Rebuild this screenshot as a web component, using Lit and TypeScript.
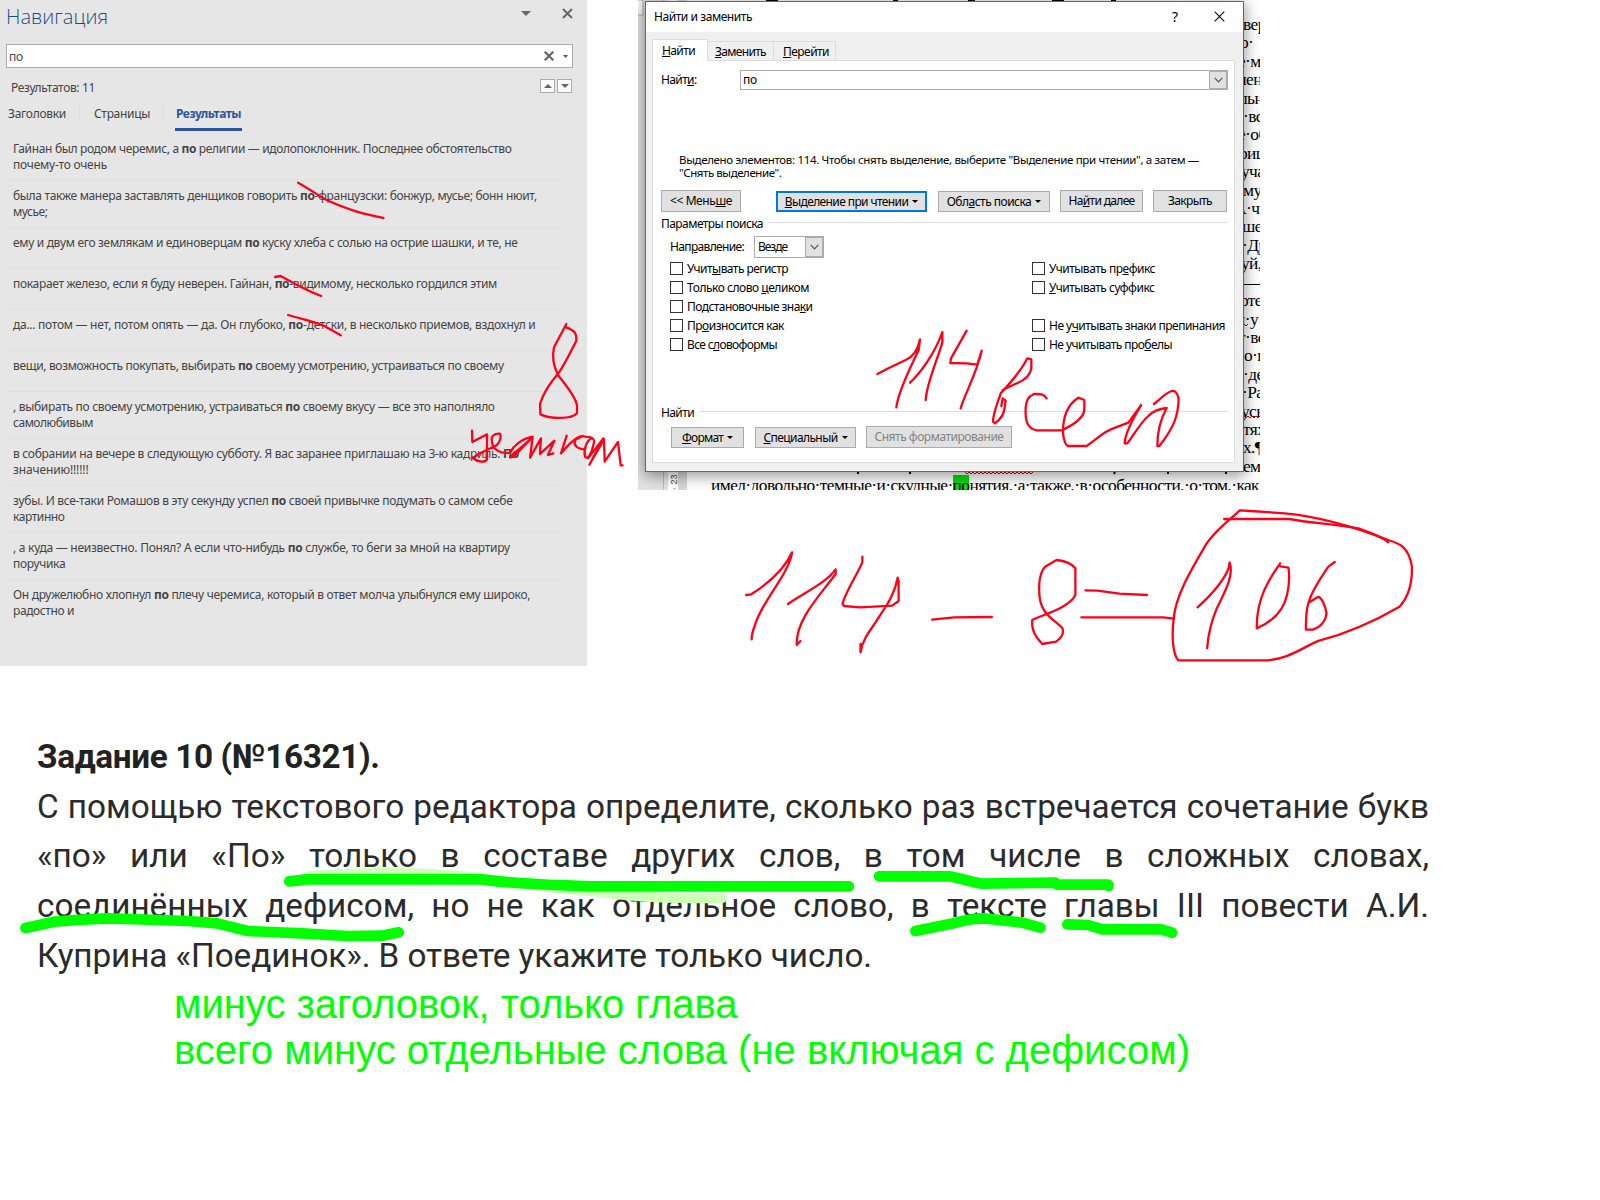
import { LitElement, html, svg, css, nothing } from "lit";
import { customElement, property } from "lit/decorators.js";

/** One line of text whose tracking is adjusted so that it spans `w` pixels. */
@customElement("fit-line")
class FitLine extends LitElement {
  @property({ type: Number }) w = 0;
  static styles = css`
    :host { display: inline-block; white-space: nowrap; }
  `;
  render() {
    return html`<slot></slot>`;
  }
  firstUpdated() {
    requestAnimationFrame(() => {
      const n = (this.textContent ?? "").trim().length;
      const natural = this.getBoundingClientRect().width;
      if (n && this.w) this.style.letterSpacing = `${((this.w - natural) / n).toFixed(4)}px`;
    });
  }
}

type Part = [number, string, string?, string?];

const results: Part[][] = [
  [[498.5, "Гайнан был родом черемис, а ", "по", " религии — идолопоклонник. Последнее обстоятельство"], [94, "почему-то очень"]],
  [[524, "была также манера заставлять денщиков говорить ", "по", "-французски: бонжур, мусье; бонн нюит,"], [34.5, "мусье;"]],
  [[504.5, "ему и двум его землякам и единоверцам ", "по", " куску хлеба с солью на острие шашки, и те, не"]],
  [[484, "покарает железо, если я буду неверен. Гайнан, ", "по", "-видимому, несколько гордился этим"]],
  [[522.5, "да... потом — нет, потом опять — да. Он глубоко, ", "по", "-детски, в несколько приемов, вздохнул и"]],
  [[490.7, "вещи, возможность покупать, выбирать ", "по", " своему усмотрению, устраиваться по своему"]],
  [[481.7, ", выбирать по своему усмотрению, устраиваться ", "по", " своему вкусу — все это наполняло"], [80, "самолюбивым"]],
  [[506, "в собрании на вечере в следующую субботу. Я вас заранее приглашаю на 3-ю кадриль. ", "По", ""], [75.5, "значению!!!!!!"]],
  [[499.5, "зубы. И все-таки Ромашов в эту секунду успел ", "по", " своей привычке подумать о самом себе"], [51.5, "картинно"]],
  [[496.8, ", а куда — неизвестно. Понял? А если что-нибудь ", "по", " службе, то беги за мной на квартиру"], [52.3, "поручика"]],
  [[517.2, "Он дружелюбно хлопнул ", "по", " плечу черемиса, который в ответ молча улыбнулся ему широко,"], [61, "радостно и"]],
];

const margin = ["вер", "о·", "е·мо", "лен", "льн", "·вс", "е·об", "риш", "уча", "му", "А·ч", "шел", "·Др", "уй,", "—·о", "оте",
  "й·у", "т·вс", "о·п", "·де", "·Ра", "усь", "тях", "х.¶", "ем"];
const marginShift = [-1, -4, -6, -6, -5, -1, -6, -5, -3, -1, -10, -2, -2, -3, 0, -4, -8, -6, 0, -1, -2, -3, -1, -1, -1];

/** Pen strokes; each layer has its own origin and units per pixel. */
interface Layer { x: number; y: number; sx: number; sy: number; cls: string; d: string[] }
const layers: Layer[] = [
  { x: 0, y: 0, sx: 2.613, sy: 3, cls: "red", d: ["M779 548C810 568 830 585 850 598C885 618 905 625 930 634C960 645 985 648 1002 654"] },
  { x: 0, y: 220, sx: 2.45, sy: 3, cls: "red", d: ["M674 171L687 168C715 185 745 210 787 228", "M706 285C740 298 790 310 800 322L835 346"] },
  { x: 460, y: 320, sx: 3, sy: 3, cls: "red", d: [
    "M319 12L282 82C278 100 277 130 293 163C315 195 345 225 351 255L351 280C335 298 275 298 241 283L240 252C250 220 265 195 293 163C310 140 335 90 349 62C350 40 345 32 319 22",
    "M36 332L37 366L81 343L81 418C75 428 55 428 38 414L60 400L110 376C120 365 125 350 120 341C100 340 92 350 96 365C97 385 115 402 150 398",
    "M150 398C160 378 185 356 218 350C200 370 160 400 150 412C165 415 180 385 218 352L210 413L243 355L241 380L240 402L283 362L264 405L280 400",
    "M320 347L303 400C325 375 345 352 368 348L345 360C340 375 350 388 375 388",
    "M372 350C395 350 408 355 400 375C395 400 385 420 375 410C370 390 380 360 395 355",
    "M384 415L430 355L388 434L432 358L434 425L474 366L482 436L488 436",
  ] },
  { x: 870, y: 320, sx: 3, sy: 3, cls: "red", d: [
    "M22 162L55 145L107 120C130 110 145 85 150 58L146 90C125 135 85 210 79 262",
    "M120 188C150 160 195 100 217 36L217 68C200 125 170 190 167 240",
    "M290 32L243 115L241 129L290 130L322 134L335 92C320 160 285 220 272 265",
    "M398 210L440 190C470 178 482 160 484 145L484 118L472 115C455 150 420 190 392 220C385 245 370 275 369 305L375 310C395 295 403 280 404 262L407 242L398 235L394 258",
    "M530 235C520 220 505 222 492 222C470 232 470 245 467 262C465 300 470 325 500 331L575 331C610 315 640 295 643 270L643 240L625 233C590 255 578 290 579 340C582 365 588 375 593 378L650 378C690 350 700 335 730 325L775 308L813 256",
    "M813 256C780 310 765 345 764 370L772 370C795 340 810 310 835 288C850 272 870 266 890 264C870 300 862 340 862 378L868 378C910 325 925 290 926 235C920 215 915 212 905 213C885 220 870 238 852 252",
  ] },
  { x: 720, y: 500, sx: 2.178, sy: 3, cls: "red", d: [
    "M57 285L68 283C100 255 140 210 157 157C150 220 100 290 80 360C75 380 68 400 69 418",
    "M148 312C180 280 230 250 252 208L252 222C215 290 165 360 167 435L175 423",
    "M310 170L310 187C300 220 270 285 267 312L270 318L305 322L375 317L389 303L389 245L387 233C380 290 355 330 340 365C325 395 310 420 306 457L306 432",
    "M462 359L510 352L592 351",
    "M733 180L708 200C695 220 694 260 696 290C700 345 730 360 746 385C750 400 745 412 732 425L702 432C690 415 678 395 680 360C700 345 760 325 774 285L774 205C765 190 750 182 733 180",
    "M796 271L822 272L870 281L930 285",
    "M787 352L965 352L988 356",
    "M1040 322C1070 285 1110 225 1110 187C1120 225 1100 275 1082 325C1070 365 1063 405 1061 444",
    "M1220 190C1200 230 1168 290 1169 385C1195 370 1225 345 1235 285C1240 255 1240 220 1238 203L1221 199",
    "M1339 186L1325 200C1305 240 1288 275 1282 308C1277 325 1276 350 1276 389L1292 389C1310 380 1320 360 1321 340C1318 315 1310 290 1302 291L1282 308",
    "M1098 57L1240 57C1290 70 1330 70 1390 85C1420 100 1450 115 1455 127",
    "M1455 120C1390 85 1310 50 1230 40L1155 33L1132 31C1110 60 1080 90 1060 130C1030 200 990 290 988 360C984 400 985 460 998 481L1193 481C1240 475 1265 445 1305 422C1365 400 1430 360 1480 320C1500 290 1508 250 1507 200C1500 140 1480 130 1455 120",
  ] },
  { x: 0, y: 720, sx: 2.119, sy: 3, cls: "pale", d: ["M650 470C700 457 880 457 930 464C1050 470 1100 500 1270 515C1350 535 1450 535 1530 535"] },
  { x: 0, y: 720, sx: 2.119, sy: 3, cls: "green", d: [
    "M613 484L650 478L1020 478C1080 490 1150 495 1250 499L1799 499",
    "M54 624L115 605C150 602 190 596 230 595L400 603L460 610L525 633L640 640L735 648L810 647L845 637",
  ] },
  { x: 720, y: 780, sx: 2.119, sy: 3, cls: "green", d: [
    "M337 289L485 289C510 295 530 305 555 311L710 308L715 314L823 314L823 318",
    "M414 453L500 428C520 420 540 415 560 415L640 428L679 443",
    "M736 433L780 435L810 448L935 448L958 458",
  ] },
];

@customElement("app-root")
class AppRoot extends LitElement {
  static styles = css`
    :host { display: block; }
    * { box-sizing: border-box; }
    .canvas { position: relative; width: 1600px; height: 1200px; background: #fff; overflow: hidden; font-family: "Noto Sans", "Open Sans", sans-serif; }
    .shots { display: flex; align-items: flex-start; gap: 51px; height: 666px; }
    .ink { position: absolute; inset: 0; pointer-events: none; }
    .ink path { fill: none; vector-effect: non-scaling-stroke; stroke-linecap: round; stroke-linejoin: round; }
    .red { stroke: #ff0018; stroke-width: 2.3px; }
    .green { stroke: #00ff00; stroke-width: 10.7px; }
    .pale { stroke: #ccffb8; stroke-width: 10px; }

    .nav { width: 587px; height: 666px; background: #e6e6e6; color: #444; font-size: 12px; }
    .nav-head { display: flex; height: 44px; padding: 3px 14px 0 6px; color: #1e4b87; }
    .nav-title { font: 300 20px/28px "Open Sans", "Noto Sans", sans-serif; flex: 1; }
    .nav-head svg { margin-top: 5px; }
    .nav-drop { margin-right: 31px; }
    .search { display: flex; align-items: center; width: 567px; height: 24px; margin-left: 6px; border: 1px solid #ababab; background: #fff; padding: 0 4px 0 2px; }
    .search fit-line { margin-right: auto; }
    .search-x { display: flex; margin-right: 9px; }
    .count { display: flex; justify-content: space-between; padding: 11px 15px 0 11px; height: 32px; line-height: 18px; }
    .steps { display: flex; gap: 2px; }
    .step { display: grid; place-items: center; width: 15px; height: 14px; border: 1px solid #ababab; background: #fafafa; }
    .tabs { display: flex; height: 34px; padding: 3px 0 0 8px; }
    .tab { line-height: 22px; height: 20px; }
    .tab-a { width: 72px; border-right: 1px solid #dedede; margin-right: 14px; }
    .tab-b { width: 69px; border-right: 1px solid #dedede; margin-right: 12px; }
    .tab-on { height: 28px; width: 67px; padding-left: 1px; border-bottom: 3px solid #2b579a; color: #2b579a; font-weight: 700; }
    .item { width: 555px; margin-left: 6px; min-height: 41px; padding: 7px 0 7px 7px; line-height: 16px; border-bottom: 1px solid #dfdfdf; }
    .item:last-child { border: 0; }
    .row { height: 16px; }

    .doc { position: relative; display: flex; width: 622px; height: 490px; overflow: hidden; background: #fff; color: #000; }
    .gutter { width: 25px; background: #e3e3e3; }
    .ruler { display: flex; align-items: flex-end; justify-content: center; width: 24px; background: linear-gradient(90deg, #bbb 1px, #e3e3e3 1px 5px, #fff 5px 15px, #d8d8d8 15px); }
    .ruler span { writing-mode: vertical-rl; transform: rotate(180deg); font: 9px/10px "Liberation Sans", sans-serif; color: #444; margin-right: 3px; height: 23px; }
    .page { flex: 1; display: flex; flex-direction: column; font: 17.4px/18.42px "Liberation Serif", serif; }
    .strip { width: 16px; margin: 15px 0 0 auto; overflow: hidden; white-space: nowrap; height: 460.5px; letter-spacing: -.6px; }
    .strip div { height: 18.42px; }
    .last { margin-left: 24px; height: 14px; line-height: 18px; }
    .mark { background: #00e000; }
    .frag { position: absolute; left: 0; top: 0; }

    .dialog { position: absolute; left: 7px; top: 1px; width: 599px; height: 471px; border: 1px solid #666; background: #f0f0f0; box-shadow: 0 3px 14px 1px rgba(0,0,0,.42); font-size: 12px; color: #000; font-family: "Noto Sans", "Open Sans", sans-serif; }
    .titlebar { display: flex; align-items: center; height: 30px; background: #fff; padding: 0 18px 2px 8px; }
    .titlebar fit-line { margin-right: auto; }
    .q { font-size: 14px; margin-right: 36px; }
    .dtabs { display: flex; align-items: flex-end; height: 29px; padding-left: 6px; }
    .dtab { height: 20px; border: 1px solid #dcdcdc; border-left: 0; padding-left: 7px; line-height: 20px; }
    .dtab.on { width: 56px; height: 22px; background: #fff; border-left: 1px solid #dcdcdc; border-bottom: 0; padding-left: 9px; line-height: 22px; z-index: 1; }
    .z { width: 66px; } .p { width: 62px; }
    .dtab.p { padding-left: 9px; }
    .panel { height: 403px; margin: -1px 8px 0 6px; border: 1px solid #dcdcdc; background: #fff; padding: 9px 6px 0 8px; }
    .find { display: flex; height: 20px; line-height: 20px; }
    .find > fit-line { margin-right: auto; }
    .combo { display: flex; width: 488px; height: 20px; border: 1px solid #ababab; padding-left: 2px; line-height: 18px; justify-content: space-between; }
    .drop { display: grid; place-items: center; width: 18px; height: 100%; border: 1px solid #ababab; background: #e1e1e1; }
    .info { margin: 63px 0 0 18px; font-size: 11.5px; line-height: 13px; }
    .info div { height: 13px; }
    .btns { display: flex; align-items: flex-end; height: 22px; margin-top: 11px; }
    .btn { display: flex; align-items: center; justify-content: center; gap: 4px; height: 21px; border: 1px solid #ababab; background: #e1e1e1; flex: none; }
    .tall { height: 22px; padding-bottom: 1px; }
    .hot { border: 2px solid #0078d7; }
    .off { color: #838383; }
    .legend { display: flex; align-items: center; gap: 5px; height: 16px; margin-top: 3px; }
    .legend i { flex: 1; height: 1px; background: #dcdcdc; margin-top: -2px; }
    .dir { display: flex; height: 22px; margin: 5px 0 0 9px; line-height: 22px; }
    .sel { display: flex; justify-content: space-between; width: 70px; height: 22px; border: 1px solid #ababab; margin-left: 10px; padding-left: 3px; line-height: 20px; }
    .checks { display: grid; grid-template-columns: 362px 1fr; grid-auto-rows: 19px; margin: 1px 0 0 9px; }
    .check { display: flex; align-items: center; gap: 4px; }
    .box { width: 13px; height: 13px; border: 1px solid #333; background: #fff; }
    .legend.low { margin-top: 50px; }
    .low-btns { margin: 6px 0 0 10px; }
    .w80 { width: 80px; margin-right: 35px; } .w151 { width: 151px; margin-right: 11px; } .w112 { width: 112px; margin-right: 10px; }
    .w83 { width: 83px; margin-right: 10px; } .w74 { width: 74px; } .w73 { width: 73px; margin-right: 11px; } .w101 { width: 101px; margin-right: 10px; } .w146 { width: 146px; }

    .task { width: 1392px; margin: 66px 0 0 37px; font: 33.3px/49.7px Roboto, sans-serif; color: #2b2b2b; }
    .task-title { font-weight: 700; height: 49.7px; color: #222; }
    .just { text-align-last: justify; white-space: nowrap; height: 49.7px; }
    .note { margin-left: 174px; font: 40px/45.7px "Liberation Sans", Arial, sans-serif; color: #0f0; padding-top: 1.5px; }
    .note div { height: 45.7px; }
  `;

  private arrow(w = 5) {
    return html`<svg width=${w} height=${Math.ceil(w / 2)} viewBox="0 0 10 5" preserveAspectRatio="none"><path d="M0 0H10L5 5Z" fill="currentColor"/></svg>`;
  }
  private cross(s: number, w: number, c: string) {
    return html`<svg width=${s} height=${s} viewBox="0 0 ${s} ${s}"><path d="M.7 .7L${s - 0.7} ${s - 0.7}M${s - 0.7} .7L.7 ${s - 0.7}" stroke=${c} stroke-width=${w} fill="none"/></svg>`;
  }
  private chevron() {
    return html`<svg width="9" height="6" viewBox="0 0 9 6"><path d="M.7 .9L4.5 4.8L8.3 .9" fill="none" stroke="#555" stroke-width="1.2"/></svg>`;
  }
  private check(w: number, text: unknown) {
    return html`<div class="check"><span class="box"></span><fit-line w=${w}>${text}</fit-line></div>`;
  }

  private nav() {
    return html`<section class="nav">
      <div class="nav-head">
        <div class="nav-title"><fit-line w="102">Навигация</fit-line></div>
        <svg class="nav-drop" width="10" height="10" viewBox="0 0 10 10"><path d="M0 3H10L5 8Z" fill="#666"/></svg>
        <svg width="11" height="11" viewBox="0 0 11 11"><path d="M1 1L10 10M10 1L1 10" stroke="#666" stroke-width="2"/></svg>
      </div>
      <div class="search">
        <fit-line w="14">по</fit-line>
        <span class="search-x">${this.cross(10, 2.2, "#666")}</span>
        <svg width="5" height="3" viewBox="0 0 5 3"><path d="M0 0H5L2.5 3Z" fill="#555"/></svg>
      </div>
      <div class="count"><fit-line w="84">Результатов: 11</fit-line>
        <div class="steps">
          <span class="step"><svg width="8" height="4" viewBox="0 0 8 4"><path d="M0 4H8L4 0Z" fill="#666"/></svg></span>
          <span class="step"><svg width="8" height="4" viewBox="0 0 8 4"><path d="M0 0H8L4 4Z" fill="#666"/></svg></span>
        </div>
      </div>
      <div class="tabs">
        <div class="tab tab-a"><fit-line w="58">Заголовки</fit-line></div>
        <div class="tab tab-b"><fit-line w="56">Страницы</fit-line></div>
        <div class="tab tab-on"><fit-line w="65">Результаты</fit-line></div>
      </div>
      <div>${results.map((r) => html`<div class="item">${r.map(([w, a, b, c]) =>
        html`<div class="row"><fit-line w=${w}>${a}${b ? html`<b>${b}</b>` : nothing}${c ?? ""}</fit-line></div>`)}</div>`)}</div>
    </section>`;
  }

  private dialog() {
    return html`<div class="dialog">
      <div class="titlebar"><fit-line w="98">Найти и заменить</fit-line><span class="q">?</span>${this.cross(11, 1.2, "#111")}</div>
      <div class="dtabs">
        <div class="dtab on"><fit-line w="33"><u>Н</u>айти</fit-line></div>
        <div class="dtab z"><fit-line w="51"><u>З</u>аменить</fit-line></div>
        <div class="dtab p"><fit-line w="46"><u>П</u>ерейти</fit-line></div>
      </div>
      <div class="panel">
        <div class="find"><fit-line w="35.5">Найт<u>и</u>:</fit-line>
          <div class="combo"><fit-line w="14">по</fit-line><span class="drop">${this.chevron()}</span></div></div>
        <div class="info">
          <div><fit-line w="520">Выделено элементов: 114. Чтобы снять выделение, выберите "Выделение при чтении", а затем —</fit-line></div>
          <div><fit-line w="102.5">"Снять выделение".</fit-line></div>
        </div>
        <div class="btns">
          <div class="btn tall w80"><fit-line w="62">&lt;&lt; Мень<u>ш</u>е</fit-line></div>
          <div class="btn hot w151"><fit-line w="123.5"><u>В</u>ыделение при чтении</fit-line>${this.arrow(6)}</div>
          <div class="btn w112"><fit-line w="84.5">Обл<u>а</u>сть поиска</fit-line>${this.arrow(6)}</div>
          <div class="btn tall w83"><fit-line w="66">На<u>й</u>ти далее</fit-line></div>
          <div class="btn tall w74"><fit-line w="44">Закрыть</fit-line></div>
        </div>
        <div class="legend"><fit-line w="102">Параметры поиска</fit-line><i></i></div>
        <div class="dir"><fit-line w="74">Нап<u>р</u>авление:</fit-line>
          <div class="sel"><fit-line w="29">Везде</fit-line><span class="drop">${this.chevron()}</span></div></div>
        <div class="checks">
          ${this.check(101, html`Учит<u>ы</u>вать регистр`)}${this.check(106, html`Учитывать пр<u>е</u>фикс`)}
          ${this.check(122, html`Только слово <u>ц</u>еликом`)}${this.check(105.5, html`<u>У</u>читывать суффикс`)}
          ${this.check(125.5, html`Подстановочные зна<u>к</u>и`)}<span></span>
          ${this.check(97, html`Пр<u>о</u>износится как`)}${this.check(176, html`Не у<u>ч</u>итывать знаки препинания`)}
          ${this.check(90, html`Все с<u>л</u>овоформы`)}${this.check(123, html`Не учитывать про<u>б</u>елы`)}
        </div>
        <div class="legend low"><fit-line w="33">Найти</fit-line><i></i></div>
        <div class="btns low-btns">
          <div class="btn w73"><fit-line w="41"><u>Ф</u>ормат</fit-line>${this.arrow(6)}</div>
          <div class="btn w101"><fit-line w="74"><u>С</u>пециальный</fit-line>${this.arrow(6)}</div>
          <div class="btn tall off w146"><fit-line w="129">Снять форматирование</fit-line></div>
        </div>
      </div>
    </div>`;
  }

  private doc() {
    const wave = (x0: number, x1: number, y: number) => {
      let d = `M${x0} ${y}`;
      for (let x = x0 + 2, i = 0; x <= x1; x += 2, i++) d += `L${x} ${y + (i % 2 ? 0 : 2)}`;
      return svg`<path d=${d} fill="none" stroke="#e00000" stroke-width="1"/>`;
    };
    return html`<section class="doc">
      <div class="gutter"></div>
      <div class="ruler"><span>·&nbsp;23</span></div>
      <div class="page">
        <div class="strip">${margin.map((t, i) => html`<div style="text-indent:${marginShift[i]}px">${t}</div>`)}</div>
        <div class="last"><fit-line w="548">имел·довольно·темные·и·скудные·<span class="mark">по</span>нятия,·а·также,·в·особенности,·о·том,·как</fit-line></div>
      </div>
      <svg class="frag" width="622" height="490" viewBox="0 0 622 490">
        <path d="M0 0H5V15H0" fill="#f8f8f8" stroke="#aaa"/>
        ${wave(327, 395, 472)}${wave(606, 622, 416)}${wave(606, 610, 324)}
        <path d="M220 472v2M272 472v2M477 472l-1 2M530 472v2M588 472v2M128 0h12M130 1h7M255 0h5M330 0h7M414 0h12M418 1v1M473 0h5" stroke="#000" stroke-width="2"/>
      </svg>
      ${this.dialog()}
    </section>`;
  }

  render() {
    return html`<main class="canvas">
      <div class="shots">${this.nav()}${this.doc()}</div>
      <div class="task">
        <div class="task-title"><fit-line w="342.5">Задание 10 (№16321).</fit-line></div>
        <div class="just">С помощью текстового редактора определите, сколько раз встречается сочетание букв</div>
        <div class="just">«по» или «По» только в составе других слов, в том числе в сложных словах,</div>
        <div class="just">соединённых дефисом, но не как отдельное слово, в тексте главы III повести А.И.</div>
        <div class="row-last"><fit-line w="835">Куприна «Поединок». В ответе укажите только число.</fit-line></div>
      </div>
      <div class="note">
        <div><fit-line w="563.5">минус заголовок, только глава</fit-line></div>
        <div><fit-line w="1016">всего минус отдельные слова (не включая с дефисом)</fit-line></div>
      </div>
      <svg class="ink" width="1600" height="1200" viewBox="0 0 1600 1200">
        ${layers.map((l) => svg`<g class=${l.cls} transform="translate(${l.x} ${l.y}) scale(${1 / l.sx} ${1 / l.sy})">${l.d.map((d) => svg`<path d=${d}/>`)}</g>`)}
      </svg>
    </main>`;
  }
}
